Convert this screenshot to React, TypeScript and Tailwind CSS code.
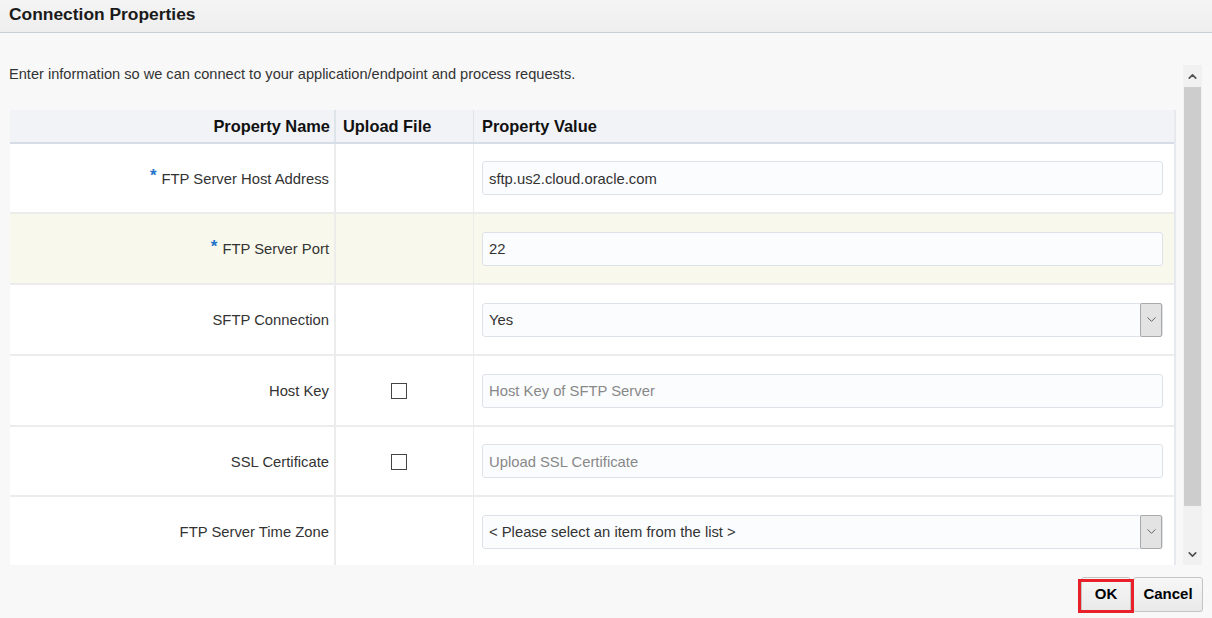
import { ChevronDown, ChevronUp } from 'lucide-react';

type Row = {
  label: string;
  required?: boolean;
  upload?: boolean;
  kind: 'text' | 'select';
  value?: string;
  placeholder?: string;
  highlight?: boolean;
  h: string;
};

const rows: Row[] = [
  { label: 'FTP Server Host Address', required: true, kind: 'text', value: 'sftp.us2.cloud.oracle.com', h: 'h-[70px]' },
  { label: 'FTP Server Port', required: true, kind: 'text', value: '22', highlight: true, h: 'h-[71px]' },
  { label: 'SFTP Connection', kind: 'select', value: 'Yes', h: 'h-[71px]' },
  { label: 'Host Key', upload: true, kind: 'text', placeholder: 'Host Key of SFTP Server', h: 'h-[71px]' },
  { label: 'SSL Certificate', upload: true, kind: 'text', placeholder: 'Upload SSL Certificate', h: 'h-[70px]' },
  { label: 'FTP Server Time Zone', kind: 'select', value: '< Please select an item from the list >', h: 'h-[71px]' },
];

function ValueField({ row }: { row: Row }) {
  if (row.kind === 'select') {
    return (
      <div className="flex items-stretch h-[34px] w-[681px] rounded-[3px] border border-[#dde2e8] bg-[#fbfcfe]">
        <span className="flex-1 flex items-center pl-[6px] pt-[2px] text-[14.8px] text-[#333]">{row.value}</span>
        <span className="flex items-center justify-center w-[22px] my-[-1px] border border-[#a9a9a9] bg-[#e3e3e3] rounded-[2px]">
          <ChevronDown className="w-[15px] h-[15px] text-[#666]" strokeWidth={1.6} />
        </span>
      </div>
    );
  }
  return (
    <div className="flex items-center h-[34px] w-[681px] pl-[6px] pt-[2px] rounded-[3px] border border-[#dde2e8] bg-[#fbfcfe] text-[14.8px]">
      {row.value ? (
        <span className="text-[#333]">{row.value}</span>
      ) : (
        <span className="text-[#888]">{row.placeholder}</span>
      )}
    </div>
  );
}

export default function App() {
  return (
    <div
      className="w-[1212px] h-[618px] bg-[#f8f8f8] flex flex-col overflow-hidden text-[#333]"
      style={{ fontFamily: '"Liberation Sans", Arial, sans-serif' }}
    >
      <div className="h-[33px] flex-shrink-0 flex items-center pl-[9px] bg-gradient-to-b from-[#f4f4f4] to-[#eeeeee] border-b border-[#c3cfd9]">
        <span className="text-[17.4px] font-bold text-[#1a1a1a] -mt-[3px]">Connection Properties</span>
      </div>

      <div className="mt-[32px] h-[500px] flex-shrink-0 flex">
        <div className="w-[1176px] overflow-hidden">
          <p className="pl-[9px] text-[14.6px] leading-[18px] text-[#333]">
            Enter information so we can connect to your application/endpoint and process requests.
          </p>

          <div className="ml-[10px] mt-[27px] w-[1166px] bg-white border-r-2 border-[#e6e9ee]">
            <div className="flex h-[34px] bg-[#f1f3f7] border-b-2 border-[#d6dde6] text-[16.4px] font-bold text-[#111]">
              <div className="w-[326px] flex items-center justify-end pr-[4px] border-r-2 border-[#dfe4ea]">Property Name</div>
              <div className="w-[138px] flex items-center pl-[7px] border-r border-[#dfe4ea]">Upload File</div>
              <div className="flex-1 flex items-center pl-[8px]">Property Value</div>
            </div>

            {rows.map((row) => (
              <div
                key={row.label}
                className={`flex ${row.h} border-b-2 border-[#ececec] ${row.highlight ? 'bg-[#f8f9ec]' : 'bg-white'}`}
              >
                <div className="w-[326px] flex items-center justify-end pr-[5px] pt-[2px] border-r-2 border-[#ececec] text-[14.8px] text-[#333]">
                  {row.required && <span className="text-[#1f74c9] font-bold text-[17px] mr-[5px] -mt-[6px]">*</span>}
                  {row.label}
                </div>
                <div className="w-[138px] flex items-center pl-[55px] pt-[1px] border-r border-[#ececec]">
                  {row.upload && <span className="w-[16px] h-[16px] border-[1.5px] border-[#444] bg-white" />}
                </div>
                <div className="flex-1 flex items-center pl-[8px]">
                  <ValueField row={row} />
                </div>
              </div>
            ))}
          </div>
        </div>

        <div className="ml-[7px] w-[19px] h-[500px] flex flex-col bg-[#f1f1f1]">
          <div className="h-[22px] flex items-center justify-center">
            <ChevronUp className="w-[13px] h-[13px] text-[#505050]" strokeWidth={3} />
          </div>
          <div className="mx-[1px] h-[419px] bg-[#cdcdcd]" />
          <div className="flex-1 flex items-end justify-center pb-[4px]">
            <ChevronDown className="w-[13px] h-[13px] text-[#505050]" strokeWidth={3} />
          </div>
        </div>
      </div>

      <div className="flex justify-end gap-[2px] pr-[9px] pt-[12px]">
        <div className="relative">
          <button className="h-[35px] w-[50px] rounded-[3px] border border-[#c4c4c4] bg-gradient-to-b from-[#f7f7f7] to-[#e9e9e9] text-[15px] font-bold text-black">
            OK
          </button>
          <div className="absolute left-[-3px] top-[2px] w-[56px] h-[34px] border-[3px] border-[#e8202a]" />
        </div>
        <button className="h-[35px] w-[70px] rounded-[3px] border border-[#c4c4c4] bg-gradient-to-b from-[#f7f7f7] to-[#e9e9e9] text-[15px] font-bold text-black">
          Cancel
        </button>
      </div>
    </div>
  );
}
